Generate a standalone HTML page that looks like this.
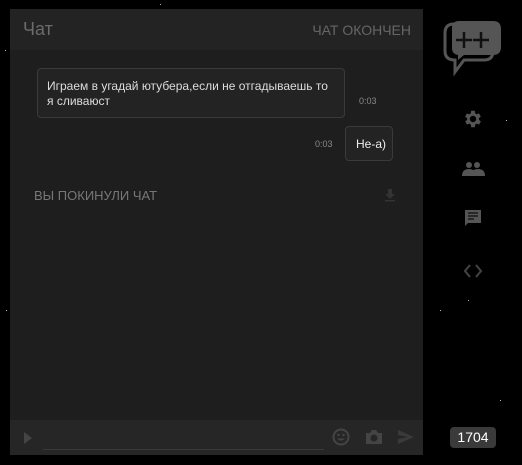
<!DOCTYPE html>
<html><head><meta charset="utf-8"><style>
body{margin:0;width:522px;height:465px;background:#000;position:relative;overflow:hidden;font-family:"Liberation Sans","DejaVu Sans",sans-serif}
.s{position:absolute;width:1px;height:1px;background:#bbb}
#p{position:absolute;left:10px;top:9px;width:413px;height:446px;background:#1e1e1e}
#h{position:absolute;left:0;top:0;width:413px;height:41px;background:#232323}
#f{position:absolute;left:0;top:411px;width:413px;height:35px;background:#262626}
.t{position:absolute;white-space:nowrap}
.b{position:absolute;border:1px solid #3a3a3a;background:#232323;border-radius:4px;color:#ddd;font-size:12px}
</style></head><body>
<div class="s" style="left:5px;top:50px"></div><div class="s" style="left:480px;top:30px"></div><div class="s" style="left:440px;top:310px"></div><div class="s" style="left:506px;top:120px"></div><div class="s" style="left:468px;top:300px"></div><div class="s" style="left:500px;top:400px"></div><div class="s" style="left:160px;top:4px"></div><div class="s" style="left:6px;top:310px"></div>
<div id="p">
<div id="h"><div class="t" style="left:13px;top:10px;font-size:18px;color:#6b6b6b">Чат</div><div class="t" style="right:12px;top:13px;font-size:14px;color:#666">ЧАТ ОКОНЧЕН</div></div>
<div class="b" style="left:27px;top:59px;width:306px;height:48px;padding:0"><div class="t" style="left:9px;top:10px;line-height:15px">Играем в угадай ютубера,если не отгадываешь то<br>я сливаюст</div></div>
<div class="t" style="left:349px;top:87px;font-size:9px;color:#888">0:03</div>
<div class="b" style="left:335px;top:117px;width:46px;height:33px"><div class="t" style="left:10px;top:10px;color:#eee">Не-а)</div></div>
<div class="t" style="left:305px;top:130px;font-size:9px;color:#888">0:03</div>
<div class="t" style="left:24px;top:179px;font-size:13px;color:#777">ВЫ ПОКИНУЛИ ЧАТ</div>
<svg style="position:absolute;left:374px;top:180px" width="12" height="13"><path d="M4 0h4v5h3L6 10 1 5h3z M1 11h10v1.5H1z" fill="#333"/></svg>
<div id="f">
<svg style="position:absolute;left:13px;top:11px" width="10" height="14"><path d="M1 1l8 6-8 6z" fill="#444"/></svg>
<div style="position:absolute;left:33px;top:29px;width:281px;height:1px;background:#3a3a3a"></div>
<svg style="position:absolute;left:322px;top:8px" width="18" height="18"><circle cx="9" cy="9" r="7.5" fill="none" stroke="#444" stroke-width="2"/><circle cx="6.5" cy="7" r="1.2" fill="#444"/><circle cx="11.5" cy="7" r="1.2" fill="#444"/><path d="M5 10.5q4 4 8 0z" fill="#444"/></svg>
<svg style="position:absolute;left:355px;top:9px" width="18" height="16"><path d="M1 4h4l2-3h4l2 3h4v11H1z" fill="#444"/><circle cx="9" cy="9" r="3.5" fill="#262626"/></svg>
<svg style="position:absolute;left:388px;top:10px" width="16" height="14"><path d="M0 0l16 7-16 7 0-5 10-2-10-2z" fill="#3a3a3a"/></svg>
</div></div>
<svg style="position:absolute;left:442px;top:19px" width="62" height="60"><path d="M3 14q0-9 9-9h30q9 0 9 9v18q0 9-9 9H22l-9 12 0-12q-10 0-10-9z" fill="none" stroke="#555" stroke-width="3"/><path d="M10 9q0-7 7-7h34q8 0 8 8v18q0 8-8 8H22l-6 5 0-5q-6-1-6-7z" fill="#555"/><path d="M14 21h16M22 13v16M31 21h16M39 13v16" stroke="#111" stroke-width="2.5"/></svg>
<svg style="position:absolute;left:462px;top:108px" width="22" height="22" viewBox="0 0 24 24"><path fill="#555" d="M19.4 13a7.5 7.5 0 000-2l2.1-1.6-2-3.5-2.5 1a7 7 0 00-1.7-1L15 3h-4l-.4 2.9a7 7 0 00-1.7 1l-2.5-1-2 3.5L6.6 11a7.5 7.5 0 000 2l-2.1 1.6 2 3.5 2.5-1a7 7 0 001.7 1L11 21h4l.4-2.9a7 7 0 001.7-1l2.5 1 2-3.5zM13 15.5A3.5 3.5 0 1113 8.5a3.5 3.5 0 010 7z" transform="translate(-1 0)"/></svg>
<svg style="position:absolute;left:461px;top:161px" width="24" height="16"><circle cx="8" cy="4" r="3" fill="#555"/><circle cx="16" cy="4" r="3" fill="#555"/><path d="M1 15q0-7 7-7t7 7zM10 15q0-7 7-7t7 7z" fill="#555"/></svg>
<svg style="position:absolute;left:463px;top:209px" width="20" height="20"><path d="M2 1h16v13H5l-3 3z" fill="#555"/><path d="M5 4h10M5 7h10M5 10h6" stroke="#1a1a1a" stroke-width="1.5"/></svg>
<svg style="position:absolute;left:463px;top:264px" width="20" height="14"><path d="M7 1L2 7l5 6M13 1l5 6-5 6" fill="none" stroke="#444" stroke-width="2"/></svg>
<div style="position:absolute;left:450px;top:427px;width:46px;height:21px;background:#3a3a3a;border-radius:4px;color:#fff;font-size:14px;text-align:center;line-height:21px">1704</div>
</body></html>
